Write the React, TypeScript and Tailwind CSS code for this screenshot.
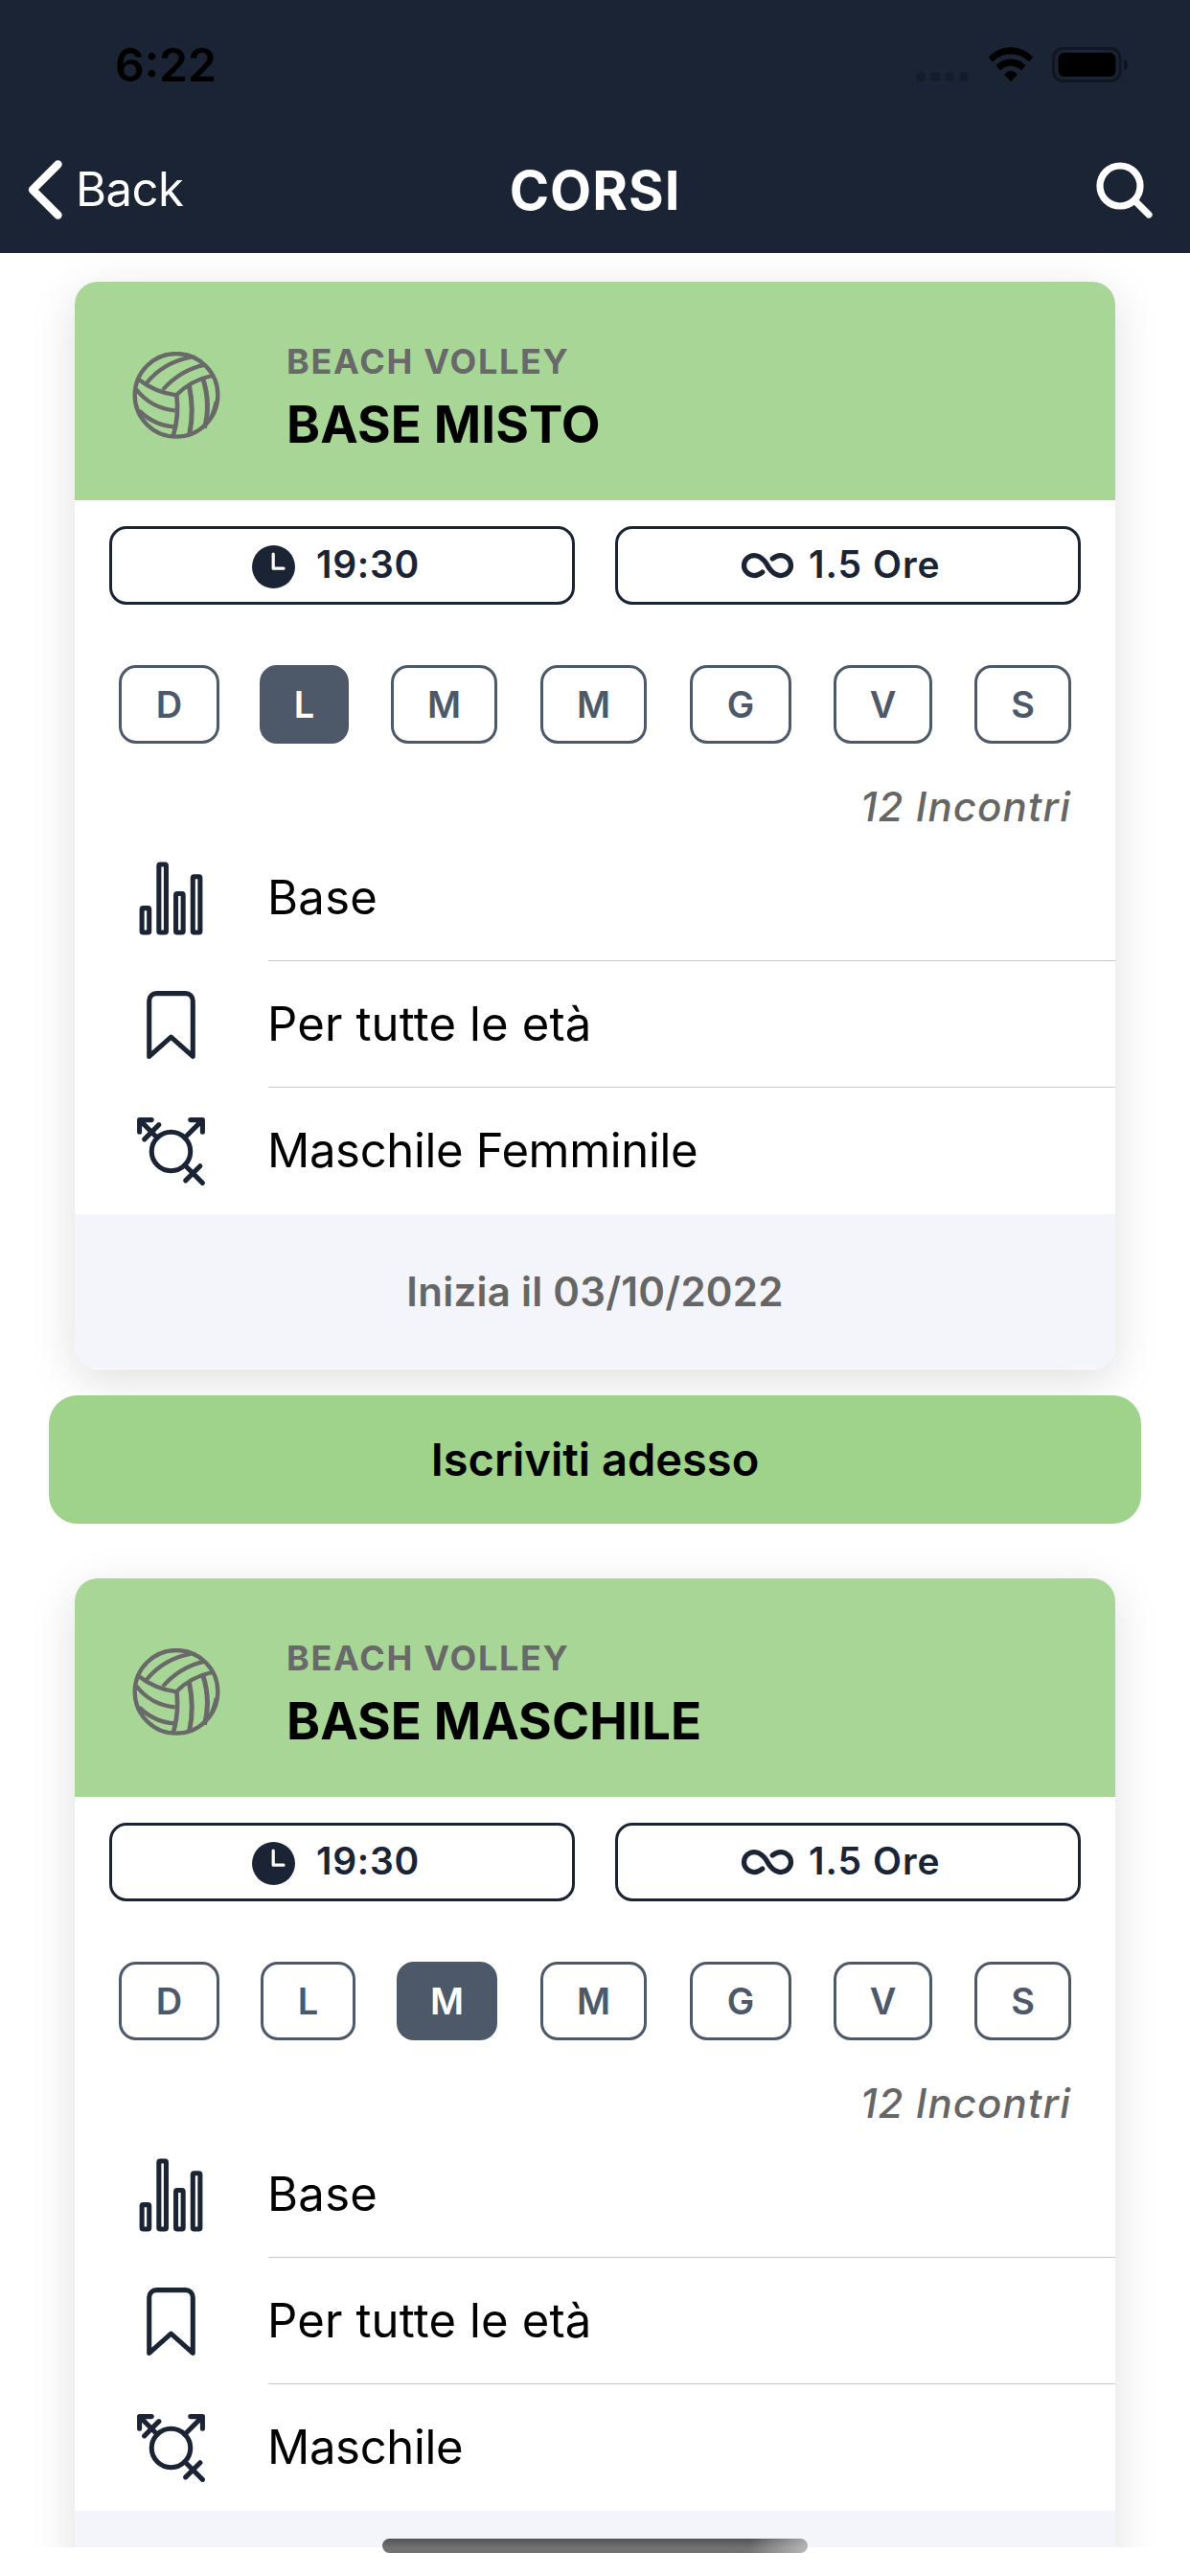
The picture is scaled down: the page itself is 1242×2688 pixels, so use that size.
import {
  IoBookmarkOutline,
  IoInfinite,
  IoStatsChartOutline,
  IoTransgenderOutline,
} from "react-icons/io5";

type Day = { label: string; box: string; active?: boolean };

type Course = {
  title: string;
  gender: string;
  start?: string;
  days: Day[];
};

const weekEnd: Day[] = [
  { label: "M", box: "ml-[45px] w-[111px]" },
  { label: "G", box: "ml-[45px] w-[106px]" },
  { label: "V", box: "ml-[44px] w-[103px]" },
  { label: "S", box: "ml-[44px] w-[101px]" },
];

const courses: Course[] = [
  {
    title: "BASE MISTO",
    gender: "Maschile Femminile",
    start: "03/10/2022",
    days: [
      { label: "D", box: "w-[105px]" },
      { label: "L", box: "ml-[42px] w-[93px]", active: true },
      { label: "M", box: "ml-[44px] w-[111px]" },
      ...weekEnd,
    ],
  },
  {
    title: "BASE MASCHILE",
    gender: "Maschile",
    days: [
      { label: "D", box: "w-[105px]" },
      { label: "L", box: "ml-[43px] w-[99px]" },
      { label: "M", box: "ml-[43px] w-[105px]", active: true },
      ...weekEnd,
    ],
  },
];

function Volleyball() {
  return (
    <svg viewBox="54 51 276 273" className="h-[91px] w-[92px]" fill="none" stroke="#696969" strokeWidth="13">
      <circle cx="192" cy="187" r="130" />
      <path d="M74 138Q125 178 192 187Q238 140 304 126" />
      <path d="M193 184Q201 255 182 316" strokeWidth="14" />
      <path d="M98 150Q152 84 238 68" />
      <path d="M150 170Q205 108 282 92" />
      <path d="M232 156Q249 235 233 310" strokeWidth="15" />
      <path d="M275 134Q301 215 280 290" strokeWidth="15" />
      <path d="M276 288Q302 262 314 206" strokeWidth="6" />
      <path d="M66 168Q112 228 188 235" />
      <path d="M76 236Q126 284 188 286" />
      <path d="M68 222Q84 270 122 298" strokeWidth="8" />
    </svg>
  );
}

function Clock() {
  return (
    <svg viewBox="0 0 45 45" className="mt-[3px] size-[45px]">
      <circle cx="22.5" cy="22.5" r="22.5" fill="#1b2434" />
      <path d="M22.2 9V24.2H33" fill="none" stroke="white" strokeWidth="3.2" strokeLinecap="round" strokeLinejoin="round" />
    </svg>
  );
}

function StatusBar() {
  return (
    <div className="flex h-[132px] items-start pr-[64px] pl-[120px]">
      <span className="mt-[38px] text-[48px] leading-[60px] font-semibold">6:22</span>
      <div className="mt-[75px] ml-auto flex gap-[5px]">
        {[0, 1, 2, 3].map((i) => (
          <span key={i} className="h-[10px] w-[10px] rounded-[4px] bg-black/20" />
        ))}
      </div>
      <svg viewBox="0 0 48 36" className="mt-[49px] ml-[20px] h-[36px] w-[48px]">
        <path d="M0.6 10.8Q10.5 0.3 24 0.3T47.4 10.8L42.8 15.4Q35 7.6 24 7.6T5.2 15.4Z" />
        <path d="M8.5 19.2Q15 12.6 24 12.6T39.5 19.2L34.9 24.4Q30.2 19.8 24 19.8T13.1 24.4Z" />
        <path d="M17.3 29Q20 25 24 25T30.7 29L24 36Z" />
      </svg>
      <svg viewBox="0 0 80 38" className="mt-[49px] ml-[19px] h-[38px] w-[80px]">
        <rect x="1.5" y="1.5" width="69.5" height="34" rx="10" fill="none" stroke="black" strokeOpacity="0.4" strokeWidth="3" />
        <rect x="6.5" y="6" width="60" height="25" rx="6" />
        <path d="M75 12.5C80 14 80 23 75 24.5Z" fillOpacity="0.45" />
      </svg>
    </div>
  );
}

function NavBar() {
  return (
    <div className="relative flex h-[132px] items-center justify-between pr-[39px] pl-[29px] text-white">
      <div className="flex items-center">
        <svg viewBox="0 0 36 62" className="h-[62px] w-[36px]" fill="none" stroke="white" strokeWidth="8.4" strokeLinecap="round" strokeLinejoin="round">
          <path d="M31.5 4.5L5 31L31.5 57.5" />
        </svg>
        <span className="ml-[14px] text-[49px] leading-[64px] tracking-[-0.5px]">Back</span>
      </div>
      <svg viewBox="0 0 60 60" className="h-[60px] w-[60px]" fill="none" stroke="white" strokeWidth="7.2" strokeLinecap="round">
        <circle cx="26" cy="26" r="21" />
        <path d="M41.5 41.5L56 56" />
      </svg>
      <h1 className="pointer-events-none absolute inset-x-0 top-[32px] text-center text-[56px] leading-[70px] font-bold tracking-[1px]">
        CORSI
      </h1>
    </div>
  );
}

function CourseCard({ course }: { course: Course }) {
  const rows = [
    { Icon: IoStatsChartOutline, text: "Base", tracking: "tracking-[0.3px]" },
    { Icon: IoBookmarkOutline, text: "Per tutte le età", tracking: "tracking-[0.15px]" },
    { Icon: IoTransgenderOutline, text: course.gender, tracking: "tracking-[-0.33px]" },
  ];
  return (
    <article className="mx-[78px] overflow-hidden rounded-[24px] bg-white shadow-[0_12px_48px_rgba(0,0,0,0.13)]">
      <header className="flex h-[228px] items-start bg-[#a8d696] pl-[60px]">
        <div className="mt-[73px]">
          <Volleyball />
        </div>
        <div className="mt-[59px] ml-[69px] font-bold">
          <p className="text-[36px] leading-[49px] tracking-[1.7px] text-[#696969]">BEACH VOLLEY</p>
          <h2 className="text-[53px] leading-[83px] tracking-[0.1px]">{course.title}</h2>
        </div>
      </header>

      <div className="mt-[27px] grid grid-cols-2 gap-[42px] px-[36px] text-[39px] font-semibold text-[#1b2434]">
        <div className="flex h-[82px] items-center rounded-[18px] border-3 border-[#1b2434] pl-[146px]">
          <Clock />
          <span className="mt-[-2px] ml-[22px] tracking-[0.7px]">19:30</span>
        </div>
        <div className="flex h-[82px] items-center rounded-[18px] border-3 border-[#1b2434] pl-[128px]">
          <IoInfinite className="size-[56px]" />
          <span className="mt-[-2px] ml-[15px] tracking-[1px]">1.5 Ore</span>
        </div>
      </div>

      <div className="mt-[63px] flex pl-[46px] text-[38px] font-semibold">
        {course.days.map((day, i) => (
          <span
            key={i}
            className={`flex h-[82px] items-center justify-center rounded-[18px] border-3 border-[#4d5869] ${day.box} ${
              day.active ? "bg-[#4d5869] text-white" : "text-[#4d5869]"
            }`}
          >
            {day.label}
          </span>
        ))}
      </div>

      <p className="mt-[36px] pr-[46px] text-right text-[42px] leading-[59px] font-medium tracking-[1.1px] text-[#666] italic">
        12 Incontri
      </p>

      {rows.map(({ Icon, text, tracking }, i) => (
        <div key={i} className="flex h-[132px] items-center pl-[60px]">
          <Icon className="mt-px size-[81px] text-[#1b2434]" />
          <div className={`ml-[61px] flex h-full flex-1 items-center text-[49px] ${tracking} ${i < 2 ? "border-b border-[#c8c7cc]" : ""}`}>
            <span className="-ml-px">{text}</span>
          </div>
        </div>
      ))}

      <footer className="flex h-[162px] items-center justify-center border-b border-white bg-[#f4f5fa] text-[42px] font-semibold tracking-[0.25px] text-[#666]">
        {course.start && `Inizia il ${course.start}`}
      </footer>
    </article>
  );
}

export default function App() {
  return (
    <div className="relative h-[2688px] w-[1242px] overflow-hidden bg-white font-['Inter',sans-serif] text-black">
      <div className="relative z-10 h-[264px] bg-[#1b2434]">
        <StatusBar />
        <NavBar />
      </div>
      <main className="h-[2394px] overflow-hidden pt-[30px]">
        {courses.map((course) => (
          <section key={course.title} className="mb-[57px]">
            <CourseCard course={course} />
            {course.start && (
              <button className="relative mx-[51px] mt-[27px] block h-[134px] w-[1140px] rounded-[30px] bg-[#9fd28a] text-[47px] font-semibold">
                Iscriviti adesso
              </button>
            )}
          </section>
        ))}
      </main>
      <div className="absolute top-[2649px] left-[399px] h-[15px] w-[444px] rounded-full bg-[linear-gradient(100deg,transparent_86%,rgba(255,255,255,0.5)),linear-gradient(#525455,#727272_65%)]" />
    </div>
  );
}
